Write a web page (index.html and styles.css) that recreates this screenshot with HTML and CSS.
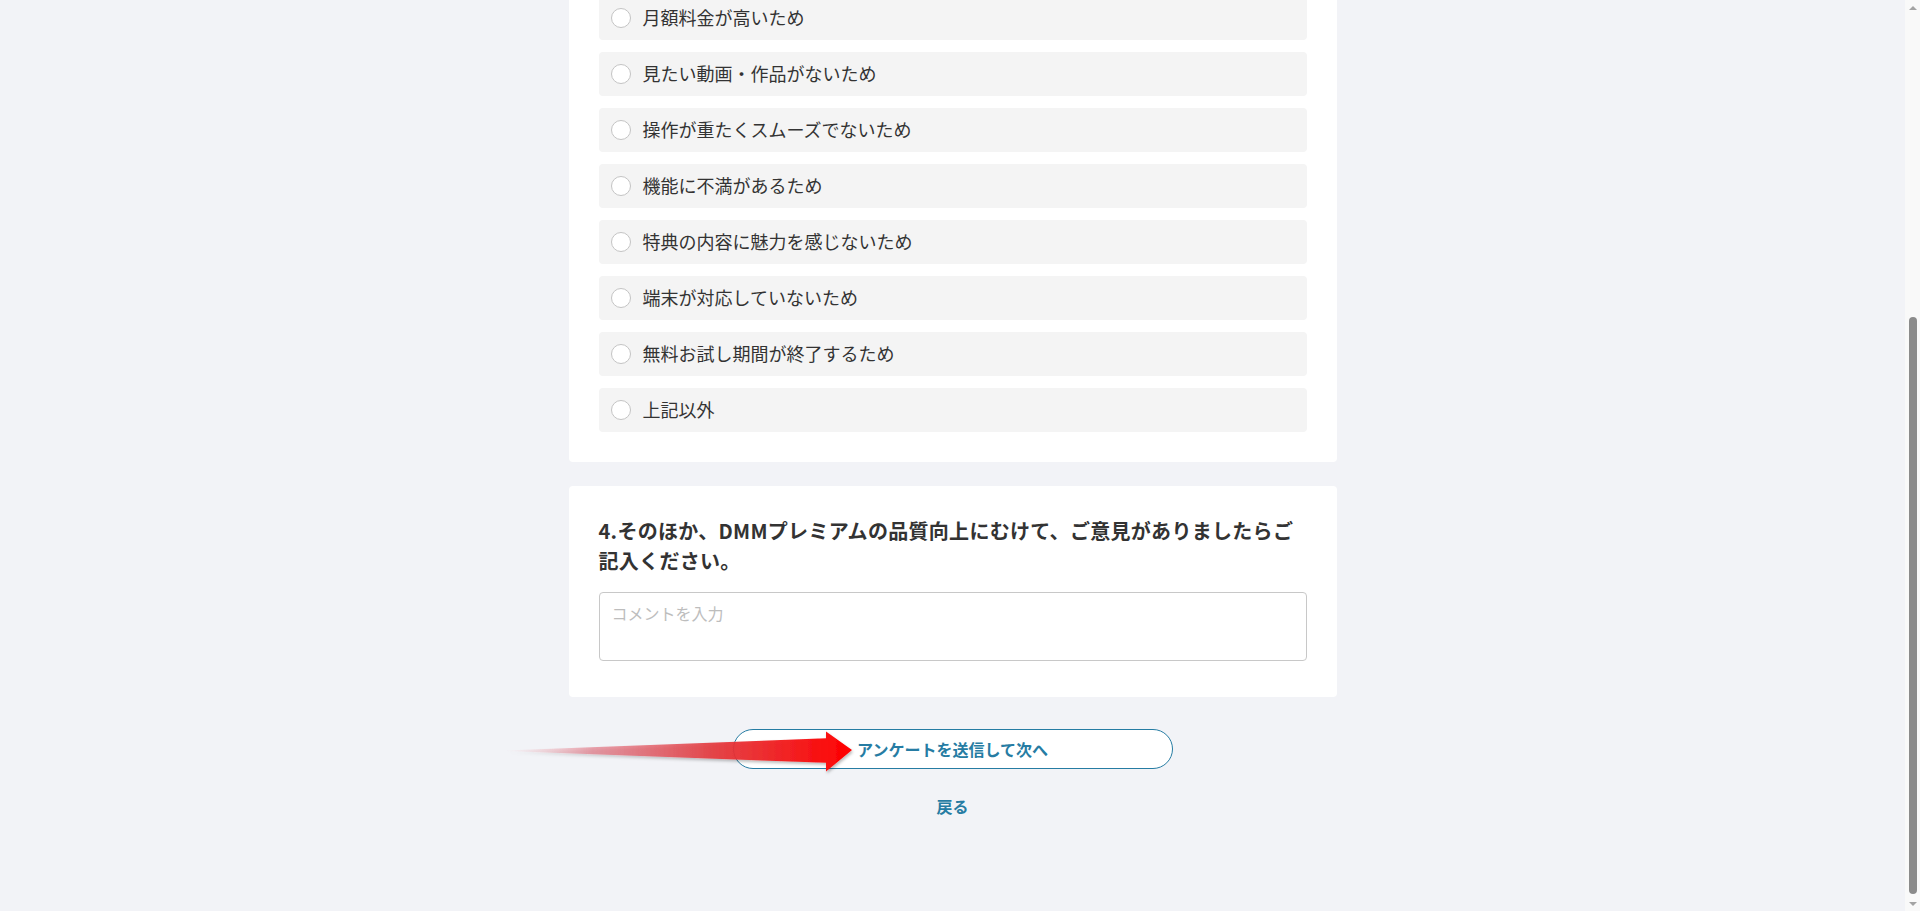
FILE: index.html
```html
<!DOCTYPE html>
<html lang="ja">
<head>
<meta charset="utf-8">
<title>アンケート</title>
<link rel="stylesheet" href="styles.css">
</head>
<body>
<div class="screen">
  <div class="viewport">
    <main class="survey">
      <section class="card">
        <h2 class="question">3.解約を検討されている理由を教えてください。</h2>
        <ul class="choices">
          <li class="choice"><span class="radio"></span><span class="choice-label">月額料金が高いため</span></li>
          <li class="choice"><span class="radio"></span><span class="choice-label">見たい動画・作品がないため</span></li>
          <li class="choice"><span class="radio"></span><span class="choice-label">操作が重たくスムーズでないため</span></li>
          <li class="choice"><span class="radio"></span><span class="choice-label">機能に不満があるため</span></li>
          <li class="choice"><span class="radio"></span><span class="choice-label">特典の内容に魅力を感じないため</span></li>
          <li class="choice"><span class="radio"></span><span class="choice-label">端末が対応していないため</span></li>
          <li class="choice"><span class="radio"></span><span class="choice-label">無料お試し期間が終了するため</span></li>
          <li class="choice"><span class="radio"></span><span class="choice-label">上記以外</span></li>
        </ul>
      </section>

      <section class="card card-comment">
        <h2 class="question question-wide">4.そのほか、DMMプレミアムの品質向上にむけて、ご意見がありましたらご記入ください。</h2>
        <textarea class="comment" placeholder="コメントを入力"></textarea>
      </section>

      <div class="actions">
        <button class="submit" type="button">アンケートを送信して次へ</button>
        <a class="back" href="#">戻る</a>
      </div>
    </main>

    <!-- red pointer arrow laid over the submit button -->
    <svg class="pointer" viewBox="0 0 360 52" width="360" height="52" aria-hidden="true">
      <defs>
        <linearGradient id="pointerFill" gradientUnits="userSpaceOnUse" x1="5" y1="0" x2="352" y2="0">
          <stop offset="0" stop-color="#f0a0a8" stop-opacity="0"/>
          <stop offset="0.25" stop-color="#e06070" stop-opacity="0.55"/>
          <stop offset="0.6" stop-color="#e43a3e" stop-opacity="0.92"/>
          <stop offset="1" stop-color="#ff0000"/>
        </linearGradient>
        <filter id="pointerShadow" x="-5%" y="-40%" width="110%" height="180%">
          <feDropShadow dx="1" dy="2" stdDeviation="1.6" flood-color="#000" flood-opacity="0.28"/>
        </filter>
      </defs>
      <polygon points="5,25.5 326,13.2 326,6.5 352,25 326,46.5 326,37.8 5,26" fill="url(#pointerFill)" filter="url(#pointerShadow)"/>
    </svg>
  </div>

  <div class="scrollbar">
    <div class="sb-button"><span class="sb-arrow-up"></span></div>
    <div class="sb-track"><div class="sb-thumb"></div></div>
    <div class="sb-button"><span class="sb-arrow-down"></span></div>
  </div>
</div>
</body>
</html>
```

FILE: styles.css
```css
* {
  box-sizing: border-box;
}

html,
body {
  margin: 0;
  padding: 0;
  height: 911px;
  overflow: hidden;
}

body {
  background: #f2f3f7;
  color: #333333;
  font-family: "Noto Sans CJK JP", "Noto Sans", sans-serif;
}

.screen {
  display: flex;
  height: 911px;
}

/* page area: pinned to the end of the document */
.viewport {
  position: relative;
  flex: 1;
  display: flex;
  flex-direction: column;
  justify-content: flex-end;
  overflow: hidden;
}

.survey {
  flex-shrink: 0;
  width: 768px;
  margin: 0 auto;
  display: flex;
  flex-direction: column;
  gap: 24px;
}

.card {
  background: #ffffff;
  border-radius: 4px;
  padding: 30px;
}

.card-comment {
  padding-bottom: 36px;
}

.question {
  margin: 0 0 16px;
  font-size: 20px;
  line-height: 30px;
  font-weight: 700;
  color: #333333;
}

.question-wide {
  letter-spacing: 0.3px;
}

.choices {
  list-style: none;
  margin: 0;
  padding: 0;
  display: flex;
  flex-direction: column;
  gap: 12px;
}

.choice {
  display: flex;
  align-items: center;
  gap: 12px;
  height: 44px;
  padding: 0 12px;
  background: #f4f4f4;
  border-radius: 4px;
}

.radio {
  flex-shrink: 0;
  width: 20px;
  height: 20px;
  border-radius: 50%;
  background: #ffffff;
  border: 1px solid #c4c4c4;
}

.choice-label {
  margin-bottom: 3px;
  font-size: 18px;
  line-height: 24px;
  color: #333333;
}

.comment {
  display: block;
  width: 100%;
  height: 69px;
  margin: 0;
  padding: 10px 12px;
  border: 1px solid #c8c8c8;
  border-radius: 4px;
  background: #ffffff;
  font-family: inherit;
  font-size: 16px;
  line-height: 20px;
  color: #333333;
  resize: none;
}

.comment::placeholder {
  color: #bdbdbd;
}

.actions {
  display: flex;
  flex-direction: column;
  align-items: center;
  padding: 8px 0 93px;
}

.submit {
  width: 440px;
  height: 40px;
  border: 1px solid #267ca3;
  border-radius: 20px;
  background: #ffffff;
  color: #267ca3;
  font-family: inherit;
  font-size: 16px;
  font-weight: 700;
  line-height: 20px;
  cursor: pointer;
}

.back {
  margin-top: 25px;
  font-size: 16px;
  line-height: 24px;
  font-weight: 700;
  color: #267ca3;
  text-decoration: none;
}

.pointer {
  position: absolute;
  left: 500px;
  top: 725px;
  overflow: visible;
}

/* classic scrollbar drawn at the right edge */
.scrollbar {
  width: 15px;
  flex-shrink: 0;
  background: #f9f9f9;
  display: flex;
  flex-direction: column;
  align-items: center;
}

.sb-button {
  height: 15px;
  width: 15px;
  display: flex;
  align-items: center;
  justify-content: center;
}

.sb-arrow-up {
  width: 0;
  height: 0;
  border-left: 4px solid transparent;
  border-right: 4px solid transparent;
  border-bottom: 4px solid #a3a3a3;
}

.sb-arrow-down {
  width: 0;
  height: 0;
  border-left: 4px solid transparent;
  border-right: 4px solid transparent;
  border-top: 4px solid #a3a3a3;
}

.sb-track {
  flex: 1;
  display: flex;
  flex-direction: column;
  justify-content: flex-end;
  align-items: center;
}

.sb-thumb {
  width: 8px;
  height: 577px;
  margin-bottom: 2px;
  border-radius: 4px;
  background: #8b8b8b;
}
```
